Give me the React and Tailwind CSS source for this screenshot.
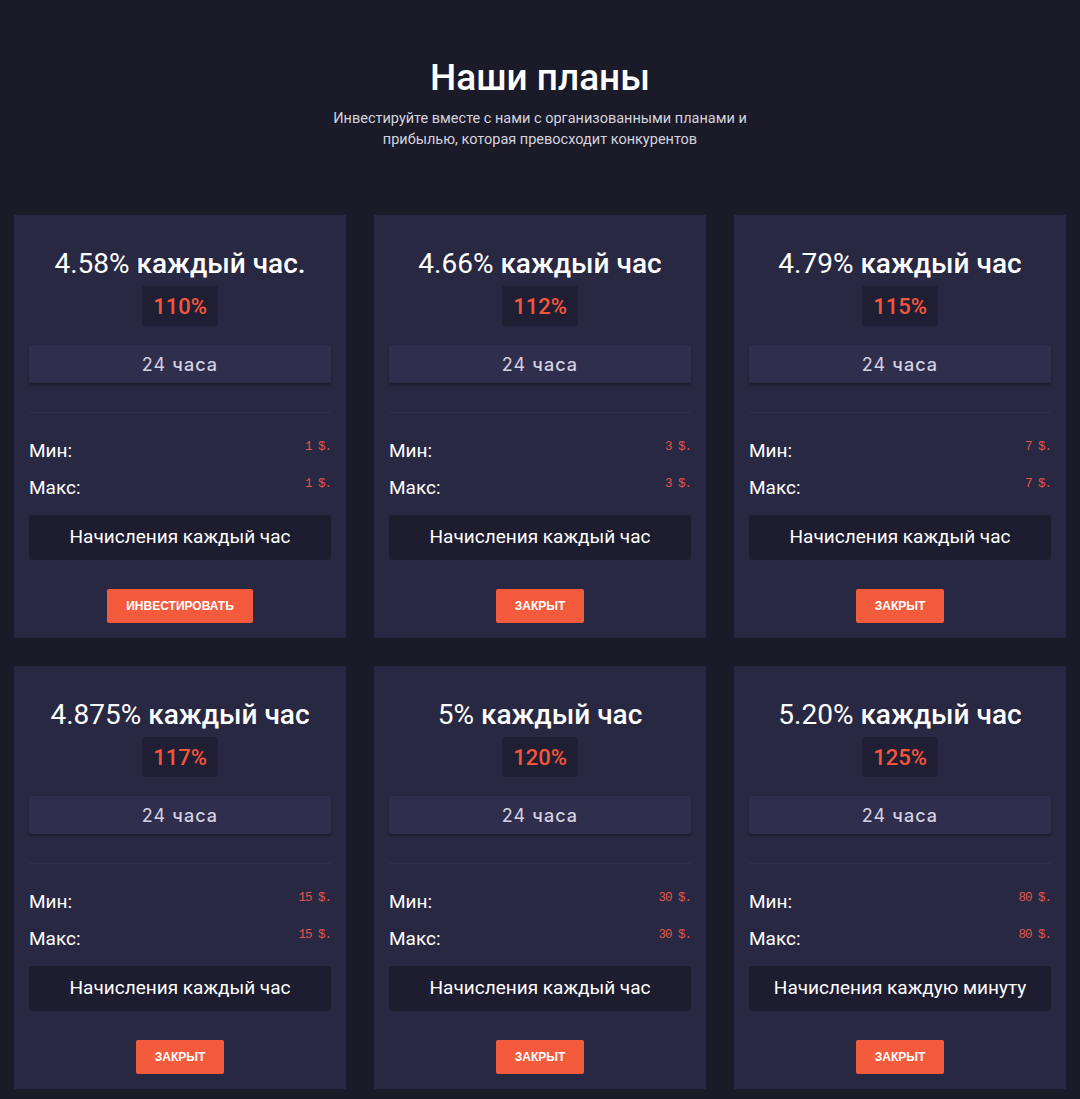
const PLANS = [
  { rate: "4.58%", label: "каждый час.", total: "110%", min: "1 $.", max: "1 $.", accrual: "Начисления каждый час", button: "Инвестировать" },
  { rate: "4.66%", label: "каждый час", total: "112%", min: "3 $.", max: "3 $.", accrual: "Начисления каждый час", button: "Закрыт" },
  { rate: "4.79%", label: "каждый час", total: "115%", min: "7 $.", max: "7 $.", accrual: "Начисления каждый час", button: "Закрыт" },
  { rate: "4.875%", label: "каждый час", total: "117%", min: "15 $.", max: "15 $.", accrual: "Начисления каждый час", button: "Закрыт" },
  { rate: "5%", label: "каждый час", total: "120%", min: "30 $.", max: "30 $.", accrual: "Начисления каждый час", button: "Закрыт" },
  { rate: "5.20%", label: "каждый час", total: "125%", min: "80 $.", max: "80 $.", accrual: "Начисления каждую минуту", button: "Закрыт" },
];

// ─── PLAN CARD ────────────────────────────────────────────────────────────────
function PlanCard({ plan }) {
  return (
    <div className="bg-[#292842] px-[15px] pt-[33px] pb-[15px] flex flex-col items-center">
      <h3 className="text-[28px] leading-[32px] text-white text-center whitespace-nowrap">
        {plan.rate} <span className="font-medium">{plan.label}</span>
      </h3>

      <div className="mt-[6px] h-[40px] px-[11px] flex items-center rounded-[3px] bg-[#1f1e33] text-[22px] font-medium text-[#f4563c]">
        {plan.total}
      </div>

      <div
        className="mt-[19px] w-full h-[38px] rounded-[3px] bg-[#302e4d] flex items-center justify-center text-[18px] tracking-[0.06em] text-[#d3d2e0] shadow-[0_2px_3px_rgba(0,0,0,0.35)]"
        style={{ fontFamily: "Inter, 'Noto Sans', sans-serif" }}
      >
        24 <span className="ml-[6px] font-medium">часа</span>
      </div>

      <div className="mt-[29px] w-full border-t border-dotted border-[#34334f]" />

      <div className="w-full mt-[19px]">
        <div className="flex justify-between items-start h-[37px]">
          <span className="text-[19px] leading-[37px] text-white">Мин:</span>
          <span
            className="text-[12.5px] leading-[30px] text-[#e0564a] tracking-[-0.08em]"
            style={{ fontFamily: "'Liberation Mono', monospace" }}
          >
            {plan.min}
          </span>
        </div>
        <div className="flex justify-between items-start h-[37px]">
          <span className="text-[19px] leading-[37px] text-white">Макс:</span>
          <span
            className="text-[12.5px] leading-[30px] text-[#e0564a] tracking-[-0.08em]"
            style={{ fontFamily: "'Liberation Mono', monospace" }}
          >
            {plan.max}
          </span>
        </div>
      </div>

      <div className="mt-[9px] w-full h-[45px] rounded-[3px] bg-[#1e1d30] flex items-center justify-center text-[19px] text-white">
        {plan.accrual}
      </div>

      <button
        className="mt-[29px] h-[34px] px-[19px] bg-[#f45b3c] text-white text-[12px] font-bold uppercase rounded-[2px]"
        style={{ fontFamily: "'Liberation Sans', Arial, sans-serif" }}
      >
        {plan.button}
      </button>
    </div>
  );
}

// ─── PAGE ─────────────────────────────────────────────────────────────────────
export default function App() {
  return (
    <div
      className="min-h-[1099px] bg-[#1b1a29] px-[14px] pt-[58px] pb-[10px]"
      style={{ fontFamily: "Roboto, 'Noto Sans', sans-serif" }}
    >
      <div className="text-center">
        <h1 className="text-[37px] leading-[40px] font-medium text-white">Наши планы</h1>
        <p className="mt-[10px] mx-auto max-w-[440px] text-[14.5px] leading-[21px] text-[#d4d3de]">
          Инвестируйте вместе с нами с организованными планами и прибылью, которая превосходит конкурентов
        </p>
      </div>

      <div className="mt-[65px] grid grid-cols-3 gap-[28px]">
        {PLANS.map((p) => (
          <PlanCard key={p.total} plan={p} />
        ))}
      </div>
    </div>
  );
}
